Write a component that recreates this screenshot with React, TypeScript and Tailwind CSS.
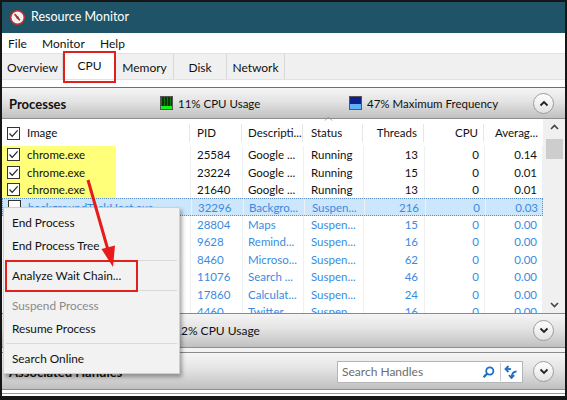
import React from 'react';

type Row = { name: string; pid: string; desc: string; status: string; threads: string; cpu: string; avg: string; checked?: boolean; suspended?: boolean; selected?: boolean };

const rows: Row[] = [
  { name: 'chrome.exe', pid: '25584', desc: 'Google ...', status: 'Running', threads: '13', cpu: '0', avg: '0.14', checked: true },
  { name: 'chrome.exe', pid: '23224', desc: 'Google ...', status: 'Running', threads: '15', cpu: '0', avg: '0.01', checked: true },
  { name: 'chrome.exe', pid: '21640', desc: 'Google ...', status: 'Running', threads: '13', cpu: '0', avg: '0.01', checked: true },
  { name: 'backgroundTaskHost.exe', pid: '32296', desc: 'Backgro...', status: 'Suspen...', threads: '216', cpu: '0', avg: '0.03', suspended: true, selected: true },
  { name: 'Maps.exe', pid: '28804', desc: 'Maps', status: 'Suspen...', threads: '15', cpu: '0', avg: '0.00', suspended: true },
  { name: 'RemindersServer.exe', pid: '9628', desc: 'Remind...', status: 'Suspen...', threads: '16', cpu: '0', avg: '0.00', suspended: true },
  { name: 'Microsoft.Photos.exe', pid: '8460', desc: 'Microso...', status: 'Suspen...', threads: '62', cpu: '0', avg: '0.00', suspended: true },
  { name: 'SearchUI.exe', pid: '11076', desc: 'Search ...', status: 'Suspen...', threads: '46', cpu: '0', avg: '0.00', suspended: true },
  { name: 'Calculator.exe', pid: '17860', desc: 'Calculat...', status: 'Suspen...', threads: '24', cpu: '0', avg: '0.00', suspended: true },
  { name: 'Twitter.exe', pid: '4460', desc: 'Twitter', status: 'Suspen...', threads: '16', cpu: '0', avg: '0.00', suspended: true },
];

const grid = 'grid grid-cols-[188px_52px_61px_60px_61px_60px_59px]';

function CheckBox({ checked }: { checked?: boolean }) {
  return (
    <span className="flex h-[13px] w-[13px] shrink-0 items-center justify-center border border-[#333] bg-white">
      {checked && (
        <svg width="11" height="11" viewBox="0 0 11 11">
          <path d="M1.5 5.5 L4.2 8.3 L9.6 2.4" fill="none" stroke="#222" strokeWidth="1.2" />
        </svg>
      )}
    </span>
  );
}

function CircleBtn({ up }: { up?: boolean }) {
  return (
    <span className="flex h-[21px] w-[21px] items-center justify-center rounded-full border border-[#9c9c9c] bg-[linear-gradient(to_bottom,#ffffff,#e2e2e2)] shadow-[inset_0_1px_0_#fff]">
      <svg width="10" height="7" viewBox="0 0 10 7">
        <path d={up ? 'M1.5 5.5 L5 2 L8.5 5.5' : 'M1.5 1.5 L5 5 L8.5 1.5'} fill="none" stroke="#222" strokeWidth="1.8" />
      </svg>
    </span>
  );
}

function CpuGraph() {
  return (
    <span className="relative block h-[14px] w-[13px] border border-[#555] bg-[repeating-linear-gradient(to_right,#0a7d0a_0,#0a7d0a_1px,#063806_1px,#063806_3px)]">
      <span className="absolute bottom-0 left-0 right-0 h-[3px] bg-[#18f018]" />
    </span>
  );
}

function FreqIcon() {
  return (
    <span className="flex h-[14px] w-[13px] flex-col border border-[#555]">
      <span className="h-[7px] bg-[#0c1f8c]" />
      <span className="flex-1 bg-[#62b0f4]" />
    </span>
  );
}

function SectionHeader({ title, children, right, h }: { title: string; children?: React.ReactNode; right?: React.ReactNode; h: string }) {
  return (
    <div className={`flex ${h} shrink-0 items-center border-b border-[#8f8f8f] bg-[linear-gradient(to_bottom,#f5f5f5,#e3e3e3_45%,#c0c0c0)] pl-[7px] pr-[11px]`}>
      <span className="w-[151px] whitespace-nowrap pt-[3px] text-[13px] font-bold text-[#111]">{title}</span>
      {children}
      <span className="ml-auto flex items-center gap-[10px]">{right}</span>
    </div>
  );
}

export default function App() {
  const menu: (string | null)[] = ['End Process', 'End Process Tree', null, 'Analyze Wait Chain...', null, 'Suspend Process', 'Resume Process', null, 'Search Online'];
  return (
    <div className="relative h-[400px] w-[567px] overflow-hidden bg-[#161616] px-[2px] pb-[4px] pt-[2px] font-['Lato','Open_Sans',sans-serif] text-[11.5px] text-[#111]">
      <div className="flex h-[394px] flex-col bg-white">
        {/* title bar */}
        <div className="flex h-[31px] shrink-0 items-center bg-[#1f5367] pl-[8px] text-white">
          <svg width="15" height="15" viewBox="0 0 16 16" className="mr-[6px]">
            <circle cx="8" cy="8" r="7.2" fill="#f4f4f4" stroke="#c9302c" strokeWidth="1.6" />
            <path d="M5 4.5 L10.5 11" stroke="#c9302c" strokeWidth="2" />
            <circle cx="8" cy="8" r="1.3" fill="#555" />
          </svg>
          <span className="text-[12.5px]">Resource Monitor</span>
        </div>
        {/* menu bar */}
        <div className="flex h-[20px] shrink-0 items-center pl-[6px] pt-[2px] text-[12px]">
          <span className="w-[34px]">File</span>
          <span className="w-[58px]">Monitor</span>
          <span>Help</span>
        </div>
        {/* tabs */}
        <div className="flex h-[27px] shrink-0 items-stretch border-y border-[#e2e2e2] bg-[#f0f0f0] pl-[1px] text-[12px]">
          <span className="flex w-[60px] items-center justify-center border-r border-[#d9d9d9] pt-[3px]">Overview</span>
          <span className="-mt-[2px] flex w-[53px] items-center justify-center bg-white pt-[1px]">CPU</span>
          <span className="flex w-[58px] items-center justify-center border-r border-[#d9d9d9] pt-[3px]">Memory</span>
          <span className="flex w-[53px] items-center justify-center border-r border-[#d9d9d9] pt-[3px]">Disk</span>
          <span className="flex w-[58px] items-center justify-center border-r border-[#d9d9d9] pt-[3px]">Network</span>
        </div>
        <div className="h-[7px] shrink-0 bg-white" />
        <div className="h-[1px] shrink-0 bg-[#6e6e6e]" />
        {/* processes */}
        <SectionHeader title="Processes" h="h-[31px]" right={<CircleBtn up />}>
          <CpuGraph />
          <span className="ml-[5px] w-[171px] pt-[1px]">11% CPU Usage</span>
          <FreqIcon />
          <span className="ml-[5px] pt-[1px]">47% Maximum Frequency</span>
        </SectionHeader>
        <div className="flex shrink-0">
          <div className="w-[541px]">
            <div className={`${grid} h-[27px] items-center pt-[1px]`}>
              <div className="flex items-center border-r border-[#e6e6e6] pl-[5px]">
                <CheckBox checked />
                <span className="ml-[7px]">Image</span>
              </div>
              <div className="border-r border-[#e6e6e6] pl-[7px]">PID</div>
              <div className="overflow-hidden whitespace-nowrap border-r border-[#e6e6e6] pl-[6px]">Descripti...</div>
              <div className="relative border-r border-[#e6e6e6] pl-[8px]">
                <svg width="9" height="5" viewBox="0 0 9 5" className="absolute -top-[8px] left-[21px]">
                  <path d="M1 4.5 L4.5 1 L8 4.5" fill="none" stroke="#999" strokeWidth="1" />
                </svg>
                Status
              </div>
              <div className="border-r border-[#e6e6e6] pr-[6px] text-right">Threads</div>
              <div className="border-r border-[#e6e6e6] pr-[5px] text-right">CPU</div>
              <div className="pr-[5px] text-right">Averag...</div>
            </div>
            <div className="h-[167px] overflow-hidden">
              {rows.map((r, i) => (
                <div
                  key={i}
                  className={`${grid} h-[17.4px] items-center leading-none ${r.suspended ? 'text-[#3a8be0]' : 'text-[#111]'} ${r.selected ? 'border border-dotted border-[#5d8fc4] bg-[#cce6fb]' : ''}`}
                >
                  <div className={`flex h-full items-center overflow-hidden whitespace-nowrap pl-[5px] ${r.checked ? 'w-[114px] bg-[#ffff7a]' : ''}`}>
                    <CheckBox checked={r.checked} />
                    <span className="ml-[7px] pt-[1px]">{r.name}</span>
                  </div>
                  <div className="flex h-full items-center border-l border-[#eef1f4] pl-[6px] pt-[1px]">{r.pid}</div>
                  <div className="flex h-full items-center overflow-hidden whitespace-nowrap border-l border-[#eef1f4] pl-[5px] pt-[1px]">{r.desc}</div>
                  <div className="flex h-full items-center border-l border-[#eef1f4] pl-[7px] pt-[1px]">{r.status}</div>
                  <div className="flex h-full items-center justify-end border-l border-[#eef1f4] pr-[6px] pt-[1px]">{r.threads}</div>
                  <div className="flex h-full items-center justify-end border-l border-[#eef1f4] pr-[5px] pt-[1px]">{r.cpu}</div>
                  <div className="flex h-full items-center justify-end border-x border-[#eef1f4] pr-[5px] pt-[1px]">{r.avg}</div>
                </div>
              ))}
            </div>
          </div>
          {/* scrollbar */}
          <div className="flex w-[22px] flex-col items-center bg-[#f0f0f0] pt-[5px]">
            <svg width="9" height="6" viewBox="0 0 9 6"><path d="M1 5 L4.5 1.5 L8 5" fill="none" stroke="#444" strokeWidth="1.6" /></svg>
            <span className="mt-[9px] h-[20px] w-[17px] bg-[#cdcdcd]" />
            <span className="flex-1" />
            <svg width="9" height="6" viewBox="0 0 9 6" className="mb-[5px]"><path d="M1 1 L4.5 4.5 L8 1" fill="none" stroke="#444" strokeWidth="1.6" /></svg>
          </div>
        </div>
        <div className="h-[1px] shrink-0 bg-[#8a8a8a]" />
        <SectionHeader title="CPU" h="h-[34px]" right={<CircleBtn />}>
          <span className="w-[13px]" />
          <span className="ml-[1px] pt-[1px] text-[12px]">12% CPU Usage</span>
        </SectionHeader>
        <div className="h-[5px] shrink-0 border-b border-[#8a8a8a] bg-[#f3f3f3]" />
        <SectionHeader
          title="Associated Handles"
          h="h-[37px]"
          right={
            <>
              <span className="mt-[2px] flex h-[22px] w-[186px] items-center border border-[#b5b5b5] bg-white pl-[4px] text-[12px] text-[#6d6d6d]">
                Search Handles
                <span className="ml-auto flex h-full items-center">
                  <svg width="13" height="13" viewBox="0 0 13 13" className="mr-[5px]">
                    <circle cx="7.8" cy="5" r="3.6" fill="none" stroke="#1c6fc2" strokeWidth="1.8" />
                    <path d="M5.2 7.6 L1.5 11.3" stroke="#1c6fc2" strokeWidth="2.2" />
                  </svg>
                  <span className="h-[18px] w-[1px] bg-[#c9c9c9]" />
                  <svg width="15" height="14" viewBox="0 0 15 14" className="mx-[3px]">
                    <path d="M7 4 H2.5" fill="none" stroke="#1c6fc2" strokeWidth="1.8" />
                    <path d="M4.5 1 L1.5 4 L4.5 7" fill="none" stroke="#1c6fc2" strokeWidth="1.8" />
                    <path d="M7.5 12.5 Q8 6.5 12.5 6.5" fill="none" stroke="#1c6fc2" strokeWidth="1.8" />
                    <path d="M5 10 L7.5 13 L10.2 10.2" fill="none" stroke="#1c6fc2" strokeWidth="1.8" />
                  </svg>
                </span>
              </span>
              <CircleBtn />
            </>
          }
        />
        <div className="flex flex-1 flex-col justify-center">
          <div className="h-[1px] bg-[#9a9a9a]" />
        </div>
      </div>

      {/* highlight on CPU tab */}
      <div className="absolute left-[63px] top-[51px] h-[32px] w-[53px] border-2 border-[#e0201c]" />

      {/* context menu */}
      <div className="absolute left-[3px] top-[207px] w-[177px] border border-[#cfcfcf] bg-[#f2f2f2] pb-[3px] pt-[3px] text-[11.8px] shadow-[2px_3px_4px_rgba(0,0,0,0.35)]">
        {menu.map((m, i) =>
          m === null ? (
            <div key={i} className="flex h-[7px] items-center px-[2px]">
              <div className="h-[1px] w-full bg-[#d9d9d9]" />
            </div>
          ) : (
            <div key={i} className={`flex h-[23px] items-center pl-[8px] pt-[1px] ${m === 'Suspend Process' ? 'text-[#8a8a8a]' : 'text-[#111]'}`}>
              {m}
            </div>
          ),
        )}
        <div className="absolute left-[1px] top-[52px] h-[32px] w-[133px] border-2 border-[#e0201c]" />
      </div>

      {/* red arrow */}
      <svg className="pointer-events-none absolute left-0 top-0" width="567" height="400">
        <line x1="88" y1="180" x2="108" y2="250" stroke="#e81a1a" strokeWidth="3" />
        <polygon points="113,267 101.5,249 115,245.5" fill="#e81a1a" />
      </svg>
    </div>
  );
}
